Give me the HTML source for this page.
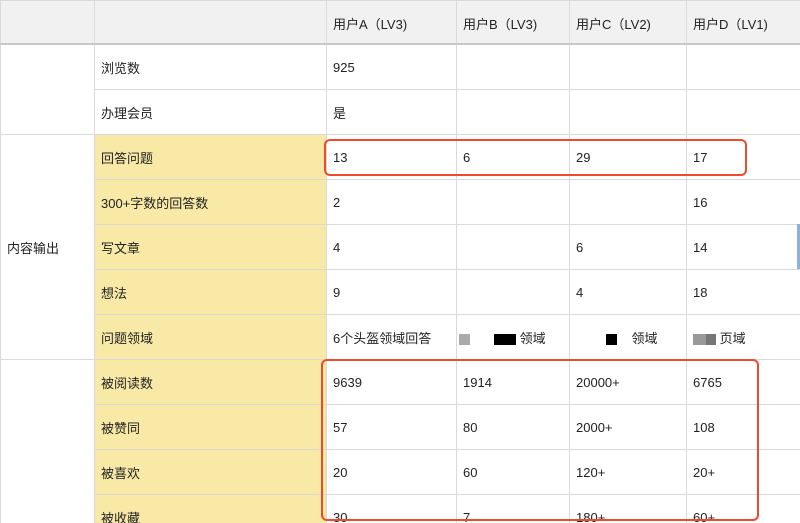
<!DOCTYPE html>
<html><head><meta charset="utf-8"><style>
html,body{margin:0;padding:0;background:#fff;overflow:hidden;width:800px;height:523px}
body{font-family:"Liberation Sans","Noto Sans CJK SC",sans-serif;font-size:13px;color:#222;position:relative}
table{border-collapse:collapse;table-layout:fixed;position:absolute;left:0;top:0;width:801px}
td{border:1px solid #dadada;height:44px;padding:0 0 0 6px;vertical-align:middle;white-space:nowrap;overflow:hidden}
tr.h td{background:#f1f1f1;height:40px;border-bottom:2px solid #c8c8c8;padding-top:2px}
td.y{background:#f8eaa6}
.box{position:absolute;border:2.5px solid #ee4a2b;border-radius:6px}
.g{display:inline-block;height:11px;vertical-align:middle}
</style></head><body>
<table>
<col style="width:94px"><col style="width:232px"><col style="width:130px"><col style="width:113px"><col style="width:117px"><col style="width:115px">
<tr class="h"><td></td><td></td><td>用户A（LV3)</td><td>用户B（LV3)</td><td>用户C（LV2)</td><td>用户D（LV1)</td></tr>
<tr><td rowspan="2"></td><td>浏览数</td><td>925</td><td></td><td></td><td></td></tr>
<tr><td>办理会员</td><td>是</td><td></td><td></td><td></td></tr>
<tr><td rowspan="5">内容输出</td><td class="y">回答问题</td><td>13</td><td>6</td><td>29</td><td>17</td></tr>
<tr><td class="y">300+字数的回答数</td><td>2</td><td></td><td></td><td>16</td></tr>
<tr><td class="y">写文章</td><td>4</td><td></td><td>6</td><td>14</td></tr>
<tr><td class="y">想法</td><td>9</td><td></td><td>4</td><td>18</td></tr>
<tr><td class="y">问题领域</td><td>6个头盔领域回答</td><td style="padding-left:2px"><span class="g" style="width:11px;background:#aaa"></span><span class="g" style="width:22px;background:#000;margin-left:24px"></span> 领域</td><td style="padding-left:36px"><span class="g" style="width:11px;background:#000"></span>&nbsp;&nbsp;&nbsp;&nbsp;领域</td><td><span class="g" style="width:13px;background:#999"></span><span class="g" style="width:10px;background:#777"></span> 页域</td></tr>
<tr><td rowspan="4"></td><td class="y">被阅读数</td><td>9639</td><td>1914</td><td>20000+</td><td>6765</td></tr>
<tr><td class="y">被赞同</td><td>57</td><td>80</td><td>2000+</td><td>108</td></tr>
<tr><td class="y">被喜欢</td><td>20</td><td>60</td><td>120+</td><td>20+</td></tr>
<tr><td class="y">被收藏</td><td>30</td><td>7</td><td>180+</td><td>60+</td></tr>
</table>
<div class="box" style="left:324px;top:139px;width:419px;height:33px"></div>
<div class="box" style="left:321px;top:359px;width:434px;height:158px"></div>
<div style="position:absolute;left:797px;top:224px;width:3px;height:45px;background:#8fb1e0"></div>
</body></html>
